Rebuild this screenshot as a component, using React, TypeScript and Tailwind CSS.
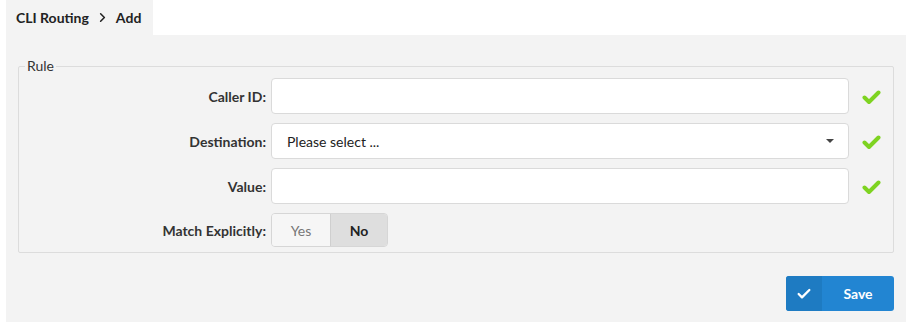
import { ChevronRight, Check } from 'lucide-react'

const FIELDS = [
  { label: 'Caller ID:', kind: 'text' },
  { label: 'Destination:', kind: 'select' },
  { label: 'Value:', kind: 'text' },
]

function OkMark() {
  return (
    <svg width="19" height="15" viewBox="0 0 19 15" className="mt-[2px]">
      <polyline
        points="2.5,7.5 7,12 16.5,2.5"
        fill="none"
        stroke="#7ed321"
        strokeWidth="4"
        strokeLinecap="round"
        strokeLinejoin="round"
      />
    </svg>
  )
}

export default function App() {
  return (
    <div className="w-[913px] h-[327px] bg-white font-['Lato','Noto_Sans',sans-serif] text-[#333] text-[14px]">
      <div className="flex">
        {/* Breadcrumb tab */}
        <div className="ml-[6px] h-[35px] w-[147px] bg-[#f3f3f3] flex items-center pl-[10px] font-bold text-[14px] text-[#222]">
          <span>CLI Routing</span>
          <ChevronRight size={15} strokeWidth={2.5} className="mx-[6px]" />
          <span>Add</span>
        </div>
      </div>

      <div className="ml-[6px] w-[900px] h-[287px] bg-[#f3f3f3] px-[12px] pt-[24px]">
        <fieldset className="border border-[#dcdcdc] rounded-[2px] pl-0 pr-0 pb-[5px] pt-[5px]">
          <legend className="ml-[6px] px-[2px] text-[14px] text-[#333] leading-[14px]">Rule</legend>
          <div className="flex flex-col gap-[9px]">
            {FIELDS.map((f) => (
              <div key={f.label} className="flex items-center">
                <label className="w-[252px] text-right font-bold pr-[5px] text-[#333]">{f.label}</label>
                <div className="w-[578px] h-[36px] bg-white border border-[#dadada] rounded-[4px] flex items-center px-[15px] justify-between">
                  {f.kind === 'select' && (
                    <>
                      <span className="text-[14px] text-[#222]">Please select ...</span>
                      <span className="w-0 h-0 border-l-[4px] border-r-[4px] border-t-[4px] border-l-transparent border-r-transparent border-t-[#444] mr-[-1px]" />
                    </>
                  )}
                </div>
                <div className="flex-1 flex justify-center">
                  <OkMark />
                </div>
              </div>
            ))}
            <div className="flex items-center">
              <label className="w-[252px] text-right font-bold pr-[5px] text-[#333]">Match Explicitly:</label>
              <div className="flex h-[34px] border border-[#d6d6d6] rounded-[4px] overflow-hidden">
                <button className="w-[59px] bg-[#f6f6f6] text-[#777] border-r border-[#cfcfcf]">Yes</button>
                <button className="w-[56px] bg-[#dedede] text-[#222] font-bold">No</button>
              </div>
            </div>
          </div>
        </fieldset>

        <div className="flex justify-end mt-[23px]">
          <button className="flex h-[35px] w-[108px] rounded-[3px] overflow-hidden bg-[#2285d2] text-white font-bold text-[14px]">
            <span className="w-[36px] h-full bg-[#1e7bc2] flex items-center justify-center">
              <Check size={16} strokeWidth={3.5} />
            </span>
            <span className="flex-1 flex items-center justify-center">Save</span>
          </button>
        </div>
      </div>
    </div>
  )
}
